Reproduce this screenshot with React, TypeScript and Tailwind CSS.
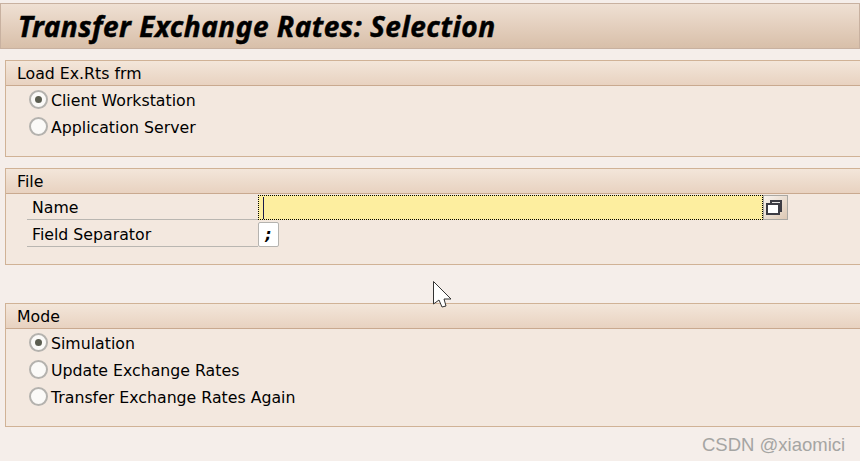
import type { ReactNode } from "react";

const Radio = ({ checked, label }: { checked?: boolean; label: string }) => (
  <div className="flex h-[27px] items-center pl-[23px]">
    <span className="flex h-[19px] w-[19px] shrink-0 items-center justify-center rounded-full border-2 border-[#b4b2ae] bg-[#fbfaf8]">
      {checked && <span className="h-[7px] w-[7px] rounded-full bg-[#5b5d50]" />}
    </span>
    <span className="ml-[3px] pt-[3px]">{label}</span>
  </div>
);

const Group = ({ title, className, children }: { title: string; className: string; children: ReactNode }) => (
  <section className={`ml-[5px] -mr-px border border-[#d0b296] bg-[#f3e8df] ${className}`}>
    <h2 className="flex h-[25px] items-center border-b border-[#c9a98f] bg-gradient-to-b from-[#f3e6da] to-[#e8d2c0] pl-[11px] pt-[2px] font-normal">
      {title}
    </h2>
    {children}
  </section>
);

const FieldRow = ({ label, className, children }: { label: string; className: string; children: ReactNode }) => (
  <div className={`flex pl-[21px] ${className}`}>
    <div className="flex w-[231px] items-center border-b border-[#b9b6b1] pl-[5px] pt-[3px]">{label}</div>
    {children}
  </div>
);

export default function App() {
  return (
    <div className="relative h-[461px] w-[860px] overflow-hidden bg-[#f5eeea] pt-[3px] text-[15.75px] leading-none text-black [font-family:'DejaVu_Sans',sans-serif]">
      <header className="flex h-[46px] items-center border border-[#c8b1a0] bg-gradient-to-b from-[#efe0d3] to-[#d8bfa9] pl-[17px]">
        <h1 className="text-[28px] font-bold italic leading-none tracking-[0.5px] [font-family:'Noto_Sans',sans-serif] [-webkit-text-stroke:0.5px_black]">Transfer Exchange Rates: Selection</h1>
      </header>

      <Group title="Load Ex.Rts frm" className="mt-[11px] h-[97px]">
        <Radio checked label="Client Workstation" />
        <Radio label="Application Server" />
      </Group>

      <Group title="File" className="mt-[11px] h-[97px]">
        <FieldRow label="Name" className="h-[26px]">
          <div className="mt-px flex h-[25px] w-[505px] items-center border border-dotted border-black bg-[#fdee9f] pl-[4px]">
            <span className="h-[22px] w-px bg-[#1a1a4a]" />
          </div>
          <button className="mt-px flex h-[25px] w-[25px] items-center justify-center border border-[#aaa8a3] bg-gradient-to-br from-[#f8f3ee] to-[#dcc8b4] pr-[3px]">
            <svg width="16" height="15" viewBox="0 0 16 15">
              <rect x="5" y="1" width="10" height="10" fill="#e8e6e4" stroke="#3c3c44" strokeWidth="2" />
              <rect x="1" y="4" width="12" height="10" fill="#fff" stroke="#3c3c44" strokeWidth="2" />
            </svg>
          </button>
        </FieldRow>
        <FieldRow label="Field Separator" className="h-[27px]">
          <div className="mt-[2px] flex h-[25px] w-[21px] items-center justify-center rounded-[2px] border border-[#b5b3af] bg-white font-bold italic">;</div>
        </FieldRow>
      </Group>

      <Group title="Mode" className="mt-[38px] h-[124px]">
        <Radio checked label="Simulation" />
        <Radio label="Update Exchange Rates" />
        <Radio label="Transfer Exchange Rates Again" />
      </Group>

      <svg className="absolute left-[433px] top-[281px]" width="19" height="28" viewBox="0 0 19 28">
        <path d="M0.5 0.5V23L6 19L9 26L13 25L11 18H18Z" fill="#fff" stroke="#333" strokeWidth="1" />
      </svg>

      <span className="absolute left-[702px] top-[436px] text-[18.5px] text-[#a5a5a3] [font-family:'Liberation_Sans',sans-serif]">CSDN @xiaomici</span>
    </div>
  );
}
